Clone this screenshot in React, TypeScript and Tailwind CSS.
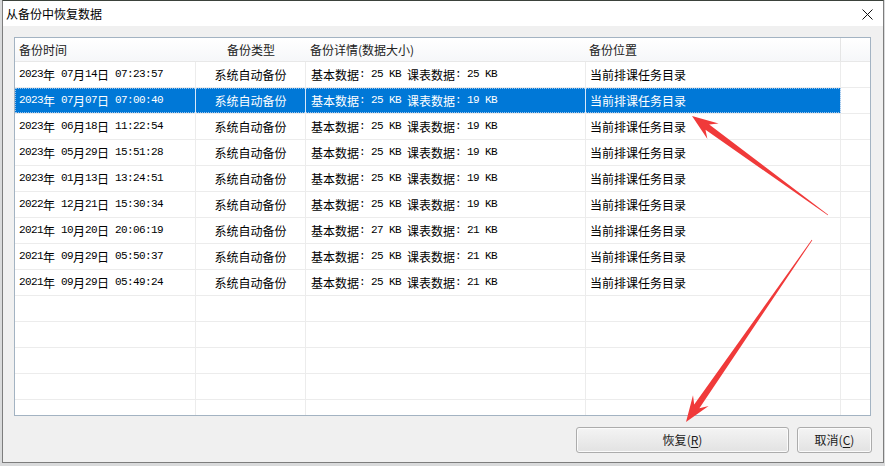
import { memo } from "react"

type Row = {
	time: string
	type: string
	detail: string
	place: string
}

const rows: Row[] = [
	{ time: "2023年 07月14日 07:23:57", type: "系统自动备份", detail: "基本数据: 25 KB 课表数据: 25 KB", place: "当前排课任务目录" },
	{ time: "2023年 07月07日 07:00:40", type: "系统自动备份", detail: "基本数据: 25 KB 课表数据: 19 KB", place: "当前排课任务目录" },
	{ time: "2023年 06月18日 11:22:54", type: "系统自动备份", detail: "基本数据: 25 KB 课表数据: 19 KB", place: "当前排课任务目录" },
	{ time: "2023年 05月29日 15:51:28", type: "系统自动备份", detail: "基本数据: 25 KB 课表数据: 19 KB", place: "当前排课任务目录" },
	{ time: "2023年 01月13日 13:24:51", type: "系统自动备份", detail: "基本数据: 25 KB 课表数据: 19 KB", place: "当前排课任务目录" },
	{ time: "2022年 12月21日 15:30:34", type: "系统自动备份", detail: "基本数据: 25 KB 课表数据: 19 KB", place: "当前排课任务目录" },
	{ time: "2021年 10月20日 20:06:19", type: "系统自动备份", detail: "基本数据: 27 KB 课表数据: 21 KB", place: "当前排课任务目录" },
	{ time: "2021年 09月29日 05:50:37", type: "系统自动备份", detail: "基本数据: 25 KB 课表数据: 21 KB", place: "当前排课任务目录" },
	{ time: "2021年 09月29日 05:49:24", type: "系统自动备份", detail: "基本数据: 25 KB 课表数据: 21 KB", place: "当前排课任务目录" },
]

const SELECTED = 1
const EMPTY_ROWS = 5

// ascii runs look like an old bitmap mono font in the original
function Mixed({ text }: { text: string }) {
	const parts = text.split(/([\x00-\x7f]+)/).filter(Boolean)
	return (
		<>
			{parts.map((p, i) =>
				/^[\x00-\x7f]+$/.test(p) ? (
					<span key={i} className="font-['Liberation_Mono'] text-[11px] tracking-[-0.6px] whitespace-pre">
						{p}
					</span>
				) : (
					<span key={i}>{p}</span>
				),
			)}
		</>
	)
}

function arrowPoints(tx: number, ty: number, px: number, py: number) {
	const dx = px - tx
	const dy = py - ty
	const len = Math.hypot(dx, dy)
	const ux = dx / len
	const uy = dy / len
	const nx = -uy
	const ny = ux
	const head = 26
	const neck = 19
	const bx = px - ux * neck
	const by = py - uy * neck
	const wx = px - ux * head
	const wy = py - uy * head
	const pts = [
		[tx + nx * 0.4, ty + ny * 0.4],
		[bx + nx * 3.2, by + ny * 3.2],
		[wx + nx * 9.5, wy + ny * 9.5],
		[px, py],
		[wx - nx * 9.5, wy - ny * 9.5],
		[bx - nx * 3.2, by - ny * 3.2],
		[tx - nx * 0.4, ty - ny * 0.4],
	]
	return pts.map((p) => `${p[0].toFixed(1)},${p[1].toFixed(1)}`).join(" ")
}

function Arrows() {
	return (
		<svg className="absolute inset-0 pointer-events-none" width={885} height={466} viewBox="0 0 885 466">
			<polygon points={arrowPoints(828, 215, 692, 116)} fill="#f03a3a" />
			<polygon points={arrowPoints(812, 240, 686, 422)} fill="#f03a3a" />
		</svg>
	)
}

function Button({ label, hot, width }: { label: string; hot: string; width: string }) {
	return (
		<button
			className={`${width} h-[26px] rounded-[3px] border border-[#acacac] bg-gradient-to-b from-[#f4f4f4] to-[#e2e2e2] shadow-[inset_0_0_0_1px_#fbfbfb] text-[12px] text-[#1a1a1a] flex items-center justify-center`}>
			<span>{label}(</span>
			<span className="underline underline-offset-2">{hot}</span>
			<span>)</span>
		</button>
	)
}

function BackupTableComponent() {
	return (
		<div className="w-[857px] h-[379px] border border-[#a3b3c2] bg-white flex flex-col overflow-hidden">
			{/* Header */}
			<div className="flex h-[24px] shrink-0 border-b border-[#e8e8e8] bg-gradient-to-b from-white to-[#f6f7f9] text-[#222]">
				<div className="w-[181px] pl-[4px] flex items-center">备份时间</div>
				<div className="w-[110px] flex items-center justify-center">备份类型</div>
				<div className="w-[280px] pl-[4px] flex items-center">备份详情(数据大小)</div>
				<div className="w-[255px] border-r border-[#e5e5e5] pl-[3px] flex items-center">备份位置</div>
				<div className="flex-1" />
			</div>

			{/* Rows */}
			{rows.map((r, i) => {
				const sel = i === SELECTED
				const line = sel ? "border-[#d8e8f8]" : "border-[#ececec]"
				return (
					<div key={i} className="flex h-[26px] shrink-0 border-b border-[#ececec]">
						<div
							className={`flex ${sel ? "bg-[#0078d7] text-white outline outline-1 outline-dotted outline-[#9cc4ec] -outline-offset-1" : "text-black"}`}>
							<div className={`w-[181px] border-r ${line} pl-[4px] flex items-center`}>
								<Mixed text={r.time} />
							</div>
							<div className={`w-[110px] border-r ${line} flex items-center justify-center`}>{r.type}</div>
							<div className={`w-[280px] border-r ${line} pl-[5px] flex items-center`}>
								<Mixed text={r.detail} />
							</div>
							<div className={`w-[255px] border-r ${line} pl-[4px] flex items-center`}>{r.place}</div>
						</div>
						<div className="flex-1" />
					</div>
				)
			})}
			{Array.from({ length: EMPTY_ROWS }).map((_, i) => (
				<div key={`e${i}`} className="flex h-[26px] shrink-0 border-b border-[#ececec]">
					<div className="w-[181px] border-r border-[#ececec]" />
					<div className="w-[110px] border-r border-[#ececec]" />
					<div className="w-[280px] border-r border-[#ececec]" />
					<div className="w-[255px] border-r border-[#ececec]" />
					<div className="flex-1" />
				</div>
			))}
		</div>
	)
}

const BackupTable = memo(BackupTableComponent)

export default function App() {
	return (
		<div className="relative w-[885px] h-[466px] bg-[#d9dadb] pl-[2px] overflow-hidden font-['Noto_Sans_CJK_SC',sans-serif] text-[12px] leading-none">
			<div className="w-[882px] h-[463px] border border-[#7d7d7d] border-t-[#3b423b] bg-[#f0f0f0] flex flex-col">
				{/* Title bar */}
				<div className="h-[25px] shrink-0 bg-white flex items-center justify-between pl-[3px] pr-[10px]">
					<span className="text-[12px] text-black">从备份中恢复数据</span>
					<svg width="11" height="11" viewBox="0 0 11 11" className="mt-[1px]">
						<path d="M0.5 0.5 L10.5 10.5 M10.5 0.5 L0.5 10.5" stroke="#111" strokeWidth="1" />
					</svg>
				</div>

				{/* Body */}
				<div className="flex-1 flex flex-col pl-[11px] pt-[11px]">
					<BackupTable />
					<div className="flex gap-[8px] pt-[11px] pl-[562px]">
						<Button label="恢复" hot="R" width="w-[213px]" />
						<Button label="取消" hot="C" width="w-[75px]" />
					</div>
				</div>
			</div>
			<Arrows />
		</div>
	)
}
